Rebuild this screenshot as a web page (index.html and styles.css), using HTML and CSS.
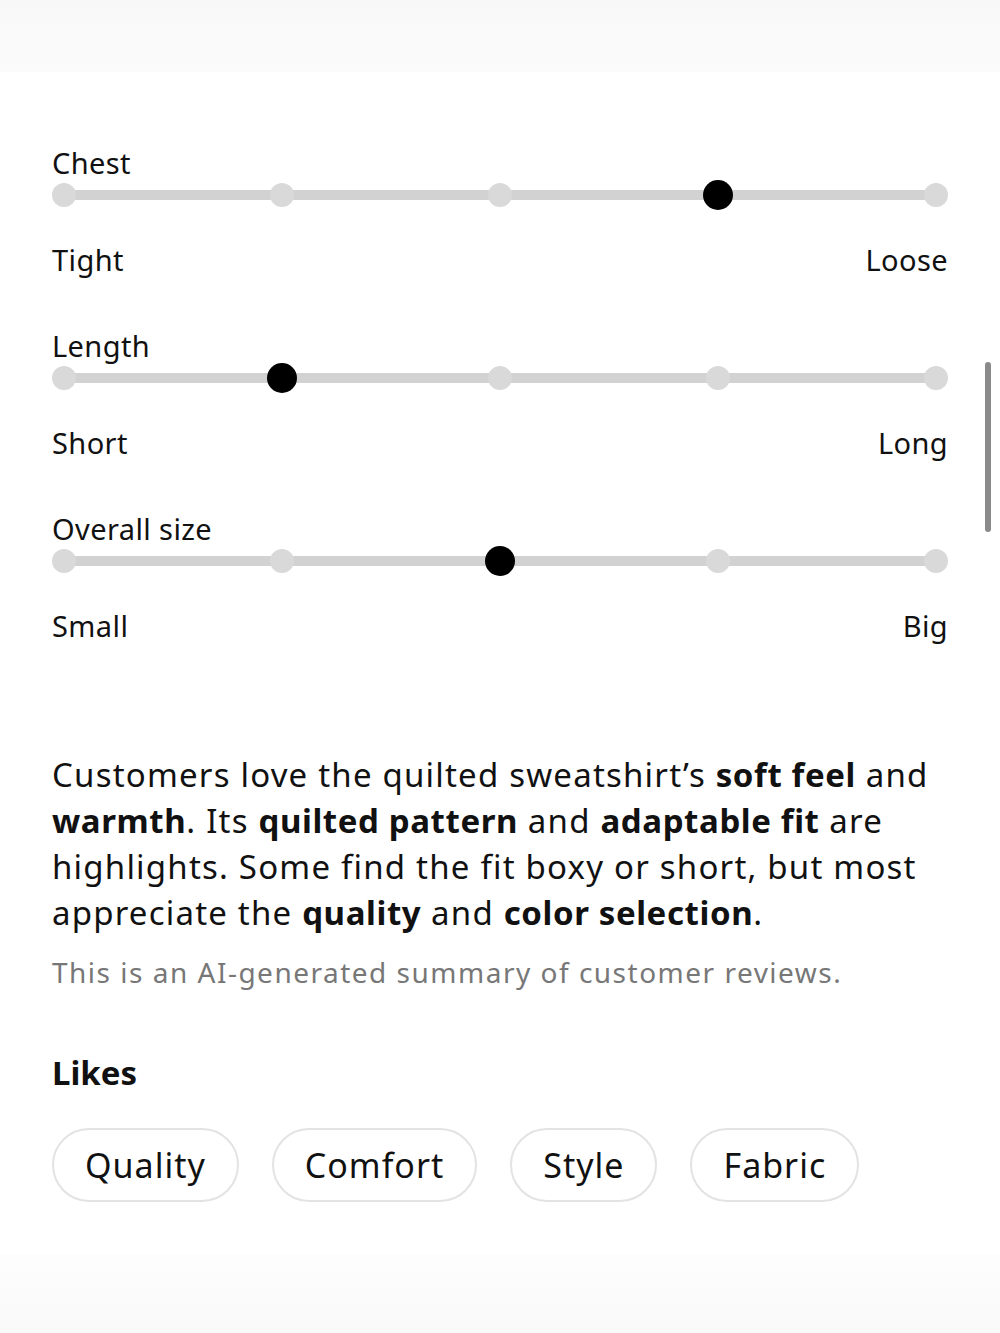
FILE: index.html
```html
<!DOCTYPE html>
<html lang="en">
<head>
    <meta charset="UTF-8">
    <meta name="viewport" content="width=device-width, initial-scale=1.0">
    <title>Fit &amp; reviews</title>
    <link rel="stylesheet" href="styles.css">
</head>
<body>
    <div class="page">
        <div class="top-fade"></div>

        <!-- fit sliders -->
        <div class="fit-list">
            <div class="fit-item">
                <div class="fit-label">Chest</div>
                <div class="slider">
                    <span class="stop"><i class="dot"></i></span>
                    <span class="stop"><i class="dot"></i></span>
                    <span class="stop"><i class="dot"></i></span>
                    <span class="stop"><i class="dot active"></i></span>
                    <span class="stop"><i class="dot"></i></span>
                </div>
                <div class="ends"><span>Tight</span><span>Loose</span></div>
            </div>
            <div class="fit-item">
                <div class="fit-label">Length</div>
                <div class="slider">
                    <span class="stop"><i class="dot"></i></span>
                    <span class="stop"><i class="dot active"></i></span>
                    <span class="stop"><i class="dot"></i></span>
                    <span class="stop"><i class="dot"></i></span>
                    <span class="stop"><i class="dot"></i></span>
                </div>
                <div class="ends"><span>Short</span><span>Long</span></div>
            </div>
            <div class="fit-item">
                <div class="fit-label">Overall size</div>
                <div class="slider">
                    <span class="stop"><i class="dot"></i></span>
                    <span class="stop"><i class="dot"></i></span>
                    <span class="stop"><i class="dot active"></i></span>
                    <span class="stop"><i class="dot"></i></span>
                    <span class="stop"><i class="dot"></i></span>
                </div>
                <div class="ends"><span>Small</span><span>Big</span></div>
            </div>
        </div>

        <!-- review summary -->
        <div class="summary">
            <p class="summary-text">Customers love the quilted sweatshirt’s <b>soft feel</b> and <b>warmth</b>. Its <b>quilted pattern</b> and <b>adaptable fit</b> are highlights. Some find the fit boxy or short, but most appreciate the <b>quality</b> and <b>color selection</b>.</p>
            <p class="summary-note">This is an AI-generated summary of customer reviews.</p>
        </div>

        <div class="likes">
            <h2 class="likes-title">Likes</h2>
            <div class="chips">
                <span class="chip">Quality</span>
                <span class="chip">Comfort</span>
                <span class="chip">Style</span>
                <span class="chip">Fabric</span>
            </div>
        </div>

        <div class="bottom-fade"></div>
        <div class="scrollbar"></div>
    </div>
</body>
</html>
```

FILE: styles.css
```css
body {
    margin: 0;
    background-color: #fff;
    font-family: 'Noto Sans', 'Lato', sans-serif;
    color: #111;
}

.page {
    position: relative;
    width: 1000px;
    height: 1333px;
    overflow: hidden;
    display: flex;
    flex-direction: column;
}

.top-fade {
    height: 72px;
    background: linear-gradient(#f8f8f8, #fbfbfb);
}

/* 尺码滑块 */
.fit-list {
    display: flex;
    flex-direction: column;
    gap: 52px;
    padding: 74px 52px 0 52px;
}

.fit-label,
.ends {
    font-size: 29px;
    line-height: 34px;
    height: 34px;
    letter-spacing: 0.4px;
}

.slider {
    display: flex;
    justify-content: space-between;
    align-items: center;
    height: 30px;
    background: linear-gradient(#d2d2d2, #d2d2d2) center / calc(100% - 24px) 10px no-repeat;
}

.stop {
    width: 24px;
    display: flex;
    justify-content: center;
}

.dot {
    display: block;
    flex: none;
    width: 24px;
    height: 24px;
    border-radius: 50%;
    background-color: #d9d9d9;
}

.dot.active {
    width: 30px;
    height: 30px;
    background-color: #000;
}

.ends {
    display: flex;
    justify-content: space-between;
    margin-top: 33px;
}

/* 评论摘要 */
.summary {
    padding: 109px 52px 0 52px;
}

.summary-text {
    margin: 0;
    font-size: 33px;
    line-height: 46px;
    letter-spacing: 1.2px;
    color: #111;
}

.summary-text b {
    font-weight: 700;
    letter-spacing: 0.6px;
}

.summary-note {
    margin: 19px 0 0 0;
    font-size: 28px;
    line-height: 34px;
    color: #777;
    letter-spacing: 1.5px;
}

.likes {
    padding: 64px 52px 0 52px;
}

.likes-title {
    margin: 0;
    font-size: 33px;
    line-height: 40px;
    font-weight: 700;
}

.chips {
    display: flex;
    gap: 33px;
    margin-top: 35px;
}

.chip {
    height: 70px;
    padding: 0 31px;
    border: 2px solid #e3e3e3;
    border-radius: 37px;
    display: flex;
    align-items: center;
    font-size: 34px;
    letter-spacing: 1px;
}

.bottom-fade {
    margin-top: auto;
    height: 78px;
    background: linear-gradient(#fdfdfd, #f9f9f9);
}

.scrollbar {
    position: absolute;
    top: 362px;
    left: 985px;
    width: 6px;
    height: 170px;
    border-radius: 3px;
    background-color: #8a8a8a;
}
```
